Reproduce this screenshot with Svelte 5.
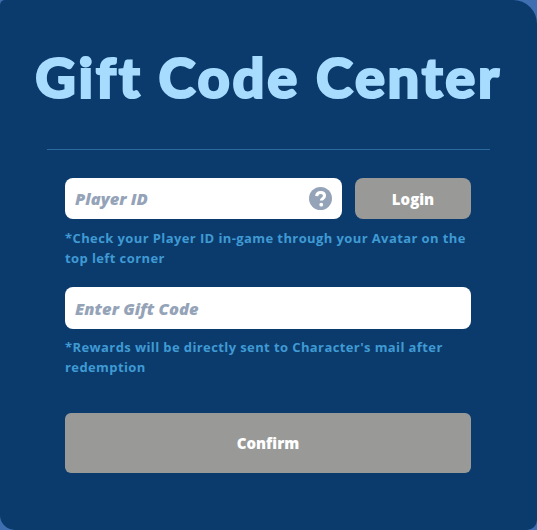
<script>
  let playerId = $state('');
  let giftCode = $state('');
</script>

<main class="panel">
  <h1>Gift Code Center</h1>
  <hr />

  <div class="form">
    <div class="row">
      <div class="field">
        <input type="text" placeholder="Player ID" bind:value={playerId} />
        <svg class="help" viewBox="0 0 24 24" aria-hidden="true">
          <circle cx="12" cy="12" r="12" fill="#94a3b8" />
          <path d="M8 9.4c.2-2.3 1.9-3.6 4.2-3.6 2.4 0 4 1.3 4 3.3 0 1.5-.8 2.3-2 3.1-.9.6-1.3 1-1.3 2" fill="none" stroke="#fff" stroke-width="3.2" />
          <circle cx="12.8" cy="18.4" r="2" fill="#fff" />
        </svg>
      </div>
      <button class="btn login" type="button">Login</button>
    </div>
    <p class="note first">*Check your Player ID in-game through your Avatar on the top left corner</p>

    <div class="field code">
      <input type="text" placeholder="Enter Gift Code" bind:value={giftCode} />
    </div>
    <p class="note">*Rewards will be directly sent to Character's mail after redemption</p>

    <button class="btn confirm" type="button">Confirm</button>
  </div>
</main>

<style>
  :global(body) {
    margin: 0;
    background: #3f6fb0;
  }

  .panel {
    box-sizing: border-box;
    width: 537px;
    height: 530px;
    padding-top: 44px;
    background: #0b3b6c;
    border-radius: 5px 24px 10px 15px;
    font-family: "Open Sans", "Noto Sans", sans-serif;
    overflow: hidden;
  }

  h1 {
    margin: 0;
    height: 64px;
    text-align: center;
    font-family: "Lato", sans-serif;
    font-size: 56px;
    font-weight: 900;
    line-height: 66px;
    letter-spacing: 2.7px;
    color: #a8dcff;
    -webkit-text-stroke: 2.2px #a8dcff;
  }

  hr {
    margin: 41px 47px 0;
    height: 1px;
    border: 0;
    background: #2a6a9e;
  }

  .form {
    margin: 28px 66px 0 65px;
  }

  .row {
    display: flex;
    gap: 13px;
  }

  .field {
    position: relative;
    flex: 1;
  }

  input {
    display: block;
    box-sizing: border-box;
    width: 100%;
    height: 41px;
    padding: 0 44px 0 10px;
    border: 0;
    border-radius: 8px;
    background: #fff;
    font-family: inherit;
    font-size: 16.5px;
    font-weight: 800;
    font-style: italic;
    outline: none;
  }

  input::placeholder {
    color: #94a3b8;
    opacity: 1;
  }

  .code input {
    height: 42px;
  }

  .help {
    position: absolute;
    top: 9px;
    right: 10px;
    width: 23px;
    height: 23px;
  }

  .btn {
    display: block;
    border: 0;
    background: #999a98;
    color: #fff;
    font-family: inherit;
    font-weight: 800;
    font-size: 15px;
    padding: 0;
  }

  .login {
    width: 116px;
    height: 41px;
    border-radius: 8px;
  }

  .note {
    margin: 8px 0 0;
    font-size: 13px;
    font-weight: 700;
    line-height: 20px;
    letter-spacing: 0.4px;
    color: #3f9ad4;
  }

  .first {
    margin: 9px 0 19px;
  }

  .confirm {
    width: 100%;
    height: 60px;
    margin-top: 36px;
    border-radius: 6px;
  }
</style>
